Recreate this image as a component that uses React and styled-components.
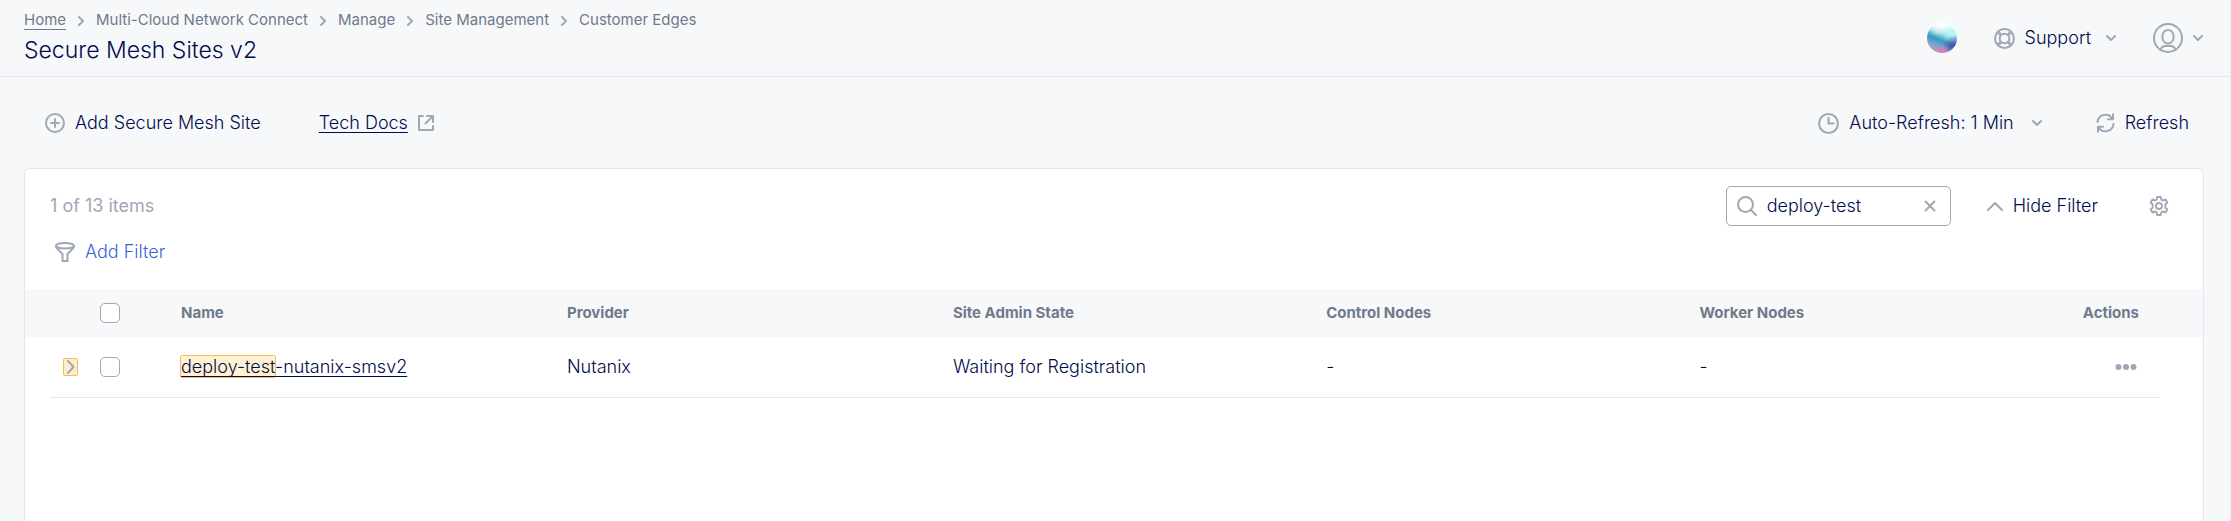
import React, { useState } from "react";
import styled, { createGlobalStyle } from "styled-components";

const ink = "#000c4d";
const slate = "#6f7a8b";
const mute = "#a0a8b5";
const line = "#e4e8ee";
const surface = "#f7f8fa";

const GlobalStyle = createGlobalStyle`
  * { box-sizing: border-box; }
  body {
    margin: 0;
    background: ${surface};
    color: ${ink};
    font: 300 18px/24px Inter, "Liberation Sans", sans-serif;
  }
  button, input { font: inherit; color: inherit; }
`;

const Page = styled.div`
  display: flex;
  flex-direction: column;
  min-height: 100vh;
  border-right: 2px solid #eff0f1;
`;

const Header = styled.header`
  display: flex;
  justify-content: space-between;
  align-items: flex-start;
  padding: 11px 26px 10px 24px;
  border-bottom: 1px solid ${line};
`;

const Crumbs = styled.ol`
  display: flex;
  align-items: center;
  gap: 12px;
  margin: 0;
  padding: 0;
  list-style: none;
  font-size: 15px;
  font-weight: 400;
  line-height: 20px;
  color: ${slate};
`;

const Crumb = styled.li`
  display: flex;
  align-items: center;
  gap: 12px;
`;

const CrumbLink = styled.a`
  color: inherit;
  text-decoration: none;
  border-bottom: 1px solid ${(p) => (p.$underlined ? slate : "transparent")};
  line-height: 18px;
`;

const Title = styled.h1`
  margin: 4px 0 0;
  font-size: 23px;
  font-weight: 300;
  line-height: 32px;
`;

const HeaderTools = styled.div`
  display: flex;
  align-items: center;
  gap: 37px;
  padding: 12px 0 0;
`;

const GhostButton = styled.button`
  display: flex;
  align-items: center;
  gap: 10px;
  padding: 0;
  border: 0;
  background: none;
  color: ${(p) => p.$color || ink};
  cursor: pointer;
  white-space: nowrap;
`;

const Spaced = styled.span`
  display: flex;
  margin-left: ${(p) => p.$left}px;
`;

const Toolbar = styled.div`
  display: flex;
  justify-content: space-between;
  align-items: center;
  padding: 34px 40px 33px 45px;
`;

const Group = styled.div`
  display: flex;
  align-items: center;
  gap: ${(p) => p.$gap}px;
`;

const DocLink = styled.a`
  display: flex;
  align-items: center;
  gap: 10px;
  color: ${ink};
  text-decoration: none;
`;

const Underlined = styled.span`
  text-decoration: underline 1px;
  text-underline-offset: 3px;
  text-decoration-skip-ink: none;
`;

const Card = styled.main`
  flex: 1;
  margin: 0 25px 0 24px;
  border: 1px solid ${line};
  border-bottom: 0;
  border-radius: 6px 6px 0 0;
  background: #fff;
`;

const ListBar = styled.div`
  display: flex;
  justify-content: space-between;
  align-items: center;
  padding: 17px 34px 0 25px;
`;

const Count = styled.span`
  color: ${mute};
  font-weight: 400;
`;

const SearchBox = styled.label`
  display: flex;
  align-items: center;
  gap: 10px;
  width: 225px;
  height: 40px;
  padding: 0 14px 0 10px;
  border: 1px solid ${mute};
  border-radius: 5px;
  svg { flex: none; }
`;

const SearchInput = styled.input`
  flex: 1;
  min-width: 0;
  padding: 0;
  border: 0;
  outline: 0;
  background: none;
`;

const FilterRow = styled.div`
  padding: 14px 30px 25px;
`;

const TableWrap = styled.div`
  margin: 0 44px 0 25px;
`;

const Table = styled.table`
  width: 100%;
  table-layout: fixed;
  border-collapse: separate;
  border-spacing: 0;
`;

const Head = styled.th`
  width: ${(p) => p.$w || "auto"};
  height: 48px;
  padding: 0 ${(p) => (p.$end ? 20 : 0)}px 0 0;
  background: ${surface};
  color: ${slate};
  font-size: 15px;
  font-weight: 700;
  text-align: ${(p) => (p.$end ? "right" : "left")};
  &:first-child { box-shadow: -25px 0 0 ${surface}; }
  &:last-child { box-shadow: 44px 0 0 ${surface}; }
`;

const Cell = styled.td`
  height: 61px;
  padding: 0 ${(p) => (p.$end ? 22 : 0)}px 0 0;
  border-bottom: 1px solid ${line};
`;

const Check = styled.input`
  display: block;
  appearance: none;
  width: 20px;
  height: 20px;
  margin: 0;
  border: 1px solid ${mute};
  border-radius: 5px;
  background: #fff;
  &:checked { background: ${mute}; }
`;

const Expand = styled.button`
  display: flex;
  align-items: center;
  justify-content: center;
  width: 15px;
  height: 18px;
  margin-left: 13px;
  padding: 0;
  border: 1px solid #f5bd55;
  border-radius: 2px;
  background: #fdeecb;
`;

const Mark = styled.mark`
  color: inherit;
  background: #fff2d2;
  border-radius: 2px;
  box-shadow: 0 0 0 1px #f5bd55;
  text-decoration: inherit;
`;

const SiteLink = styled.a`
  color: ${ink};
  text-decoration: underline 1px;
  text-underline-offset: 3px;
  text-decoration-skip-ink: none;
`;

const MoreButton = styled.button`
  display: block;
  margin-left: auto;
  padding: 0;
  border: 0;
  background: none;
  svg { display: block; }
`;

const Icon = ({ w = 20, h = 20, sw = 2, box, children }) => (
  <svg
    width={w}
    height={h}
    viewBox={box || `0 0 ${w} ${h}`}
    fill="none"
    stroke={mute}
    strokeWidth={sw}
    strokeLinecap="round"
    strokeLinejoin="round"
    aria-hidden="true"
  >
    {children}
  </svg>
);

const CrumbChevron = () => (
  <Icon w={6} h={10}><path d="M1 1l4 4-4 4" /></Icon>
);
const DownChevron = () => (
  <Icon w={10} h={6}><path d="M1 1l4 4 4-4" /></Icon>
);
const UpChevron = () => (
  <Icon w={16} h={10}><path d="M1 9l7-7 7 7" /></Icon>
);
const PlusCircle = () => (
  <Icon><circle cx="10" cy="10" r="9" /><path d="M10 6v8M6 10h8" /></Icon>
);
const External = () => (
  <Icon w={16} h={16}>
    <path d="M5 1H1v14h14v-4M9 1h6v6M15 1L7.5 8.5" />
  </Icon>
);
const Lifebuoy = () => (
  <Icon w={21} h={21} box="0 0 20 20" sw={1.9}>
    <circle cx="10" cy="10" r="9" />
    <circle cx="10" cy="10" r="4.6" />
    <path d="M3.2 4.6l3 2.4M4.6 3.2l2.4 3M16.8 4.6l-3 2.4M15.4 3.2l-2.4 3M3.2 15.4l3-2.4M4.6 16.8l2.4-3M16.8 15.4l-3-2.4M15.4 16.8l-2.4-3" strokeWidth="1.4" />
  </Icon>
);
const User = () => (
  <Icon w={30} h={30}>
    <circle cx="15" cy="15" r="14" />
    <rect x="9.5" y="7" width="11" height="13.5" rx="5.5" />
    <path d="M8 26.500c0-5 14-5 14 0" />
  </Icon>
);
const Clock = () => (
  <Icon w={21} h={21} box="0 0 20 20"><circle cx="10" cy="10" r="9" /><path d="M10 4.8V10h5" /></Icon>
);
const Cycle = () => (
  <Icon w={19} h={20}>
    <path d="M1.5 9a8 8 0 0 1 14.8-3.4M17 1.2v5h-5M17.5 11a8 8 0 0 1-14.8 3.4M2 18.8v-5h5" />
  </Icon>
);
const Magnifier = () => (
  <Icon><circle cx="8.5" cy="8.5" r="7.5" /><path d="M14 14l5 5" /></Icon>
);
const Cross = () => (
  <Icon w={12} h={12}><path d="M1.5 1.5l9 9M10.5 1.5l-9 9" /></Icon>
);
const Gear = () => (
  <Icon sw={1.9}>
    <path d="M8.2 1h3.6l.5 2.6 1.7.9 2.5-1 1.9 3-2 1.8v3.4l2 1.8-1.9 3-2.5-1-1.7.9-.5 2.600H8.200l-.5-2.600-1.7-.9-2.5 1-1.9-3 2-1.8V8.300l-2-1.800 1.9-3 2.500 1 1.700-.9z" />
    <circle cx="10" cy="10" r="3" />
  </Icon>
);
const Funnel = () => (
  <Icon>
    <ellipse cx="10" cy="3.8" rx="9" ry="2.8" />
    <path d="M1 4.2c0 1 .4 1.600 1.200 2.400L7.500 12v7h5v-7l5.300-5.400c.8-.8 1.200-1.400 1.200-2.400" />
  </Icon>
);
const Dots = () => (
  <svg width="22" height="8" viewBox="0 0 22 8" fill={mute} aria-hidden="true">
    <circle cx="3.5" cy="4" r="3" /><circle cx="11" cy="4" r="3" /><circle cx="18.5" cy="4" r="3" />
  </svg>
);
const Orb = () => (
  <svg width="30" height="30" viewBox="0 0 30 30" aria-hidden="true">
    <defs>
      <linearGradient id="orb" x1="0.68" y1="0.02" x2="0.28" y2="0.98">
        <stop offset="0.08" stopColor="#ffffff" />
        <stop offset="0.36" stopColor="#a0dbe6" />
        <stop offset="0.58" stopColor="#359abf" />
        <stop offset="0.78" stopColor="#7fa3cf" />
        <stop offset="1" stopColor="#c79ac8" />
      </linearGradient>
      <radialGradient id="orbCyan" cx="0.88" cy="0.3" r="0.4">
        <stop offset="0" stopColor="#b4fbfb" />
        <stop offset="1" stopColor="#b4fbfb" stopOpacity="0" />
      </radialGradient>
      <radialGradient id="orbGlow" cx="0.38" cy="0.04" r="0.4">
        <stop offset="0" stopColor="#ffffff" />
        <stop offset="1" stopColor="#ffffff" stopOpacity="0" />
      </radialGradient>
      <radialGradient id="orbViolet" cx="0.95" cy="0.8" r="0.42">
        <stop offset="0" stopColor="#4a3aa8" />
        <stop offset="1" stopColor="#4a3aa8" stopOpacity="0" />
      </radialGradient>
      <radialGradient id="orbPink" cx="0.5" cy="1" r="0.28">
        <stop offset="0" stopColor="#ef6fa8" />
        <stop offset="1" stopColor="#ef6fa8" stopOpacity="0" />
      </radialGradient>
    </defs>
    {["orb", "orbCyan", "orbGlow", "orbViolet", "orbPink"].map((id) => (
      <circle key={id} cx="15" cy="15" r="15" fill={`url(#${id})`} />
    ))}
  </svg>
);

const trail = ["Home", "Multi-Cloud Network Connect", "Manage", "Site Management", "Customer Edges"];

export default function App() {
  const [query, setQuery] = useState("deploy-test");
  return (
    <Page>
      <GlobalStyle />
      <Header>
        <div>
          <nav aria-label="Breadcrumb">
            <Crumbs>
              {trail.map((t, i) => (
                <Crumb key={t}>
                  {i > 0 && <CrumbChevron />}
                  <CrumbLink href="#" $underlined={i === 0}>{t}</CrumbLink>
                </Crumb>
              ))}
            </Crumbs>
          </nav>
          <Title>Secure Mesh Sites v2</Title>
        </div>
        <HeaderTools>
          <GhostButton aria-label="Assistant"><Orb /></GhostButton>
          <GhostButton>
            <Lifebuoy />Support<Spaced $left={5}><DownChevron /></Spaced>
          </GhostButton>
          <GhostButton aria-label="Account"><User /><DownChevron /></GhostButton>
        </HeaderTools>
      </Header>

      <Toolbar>
        <Group $gap={58}>
          <GhostButton><PlusCircle />Add Secure Mesh Site</GhostButton>
          <DocLink href="#"><Underlined>Tech Docs</Underlined><External /></DocLink>
        </Group>
        <Group $gap={54}>
          <GhostButton>
            <Clock />Auto-Refresh: 1 Min<Spaced $left={8}><DownChevron /></Spaced>
          </GhostButton>
          <GhostButton><Cycle />Refresh</GhostButton>
        </Group>
      </Toolbar>

      <Card>
        <ListBar>
          <Count>1 of 13 items</Count>
          <Group $gap={51}>
            <Group $gap={36}>
              <SearchBox>
                <Magnifier />
                <SearchInput aria-label="Search" value={query} onChange={(e) => setQuery(e.target.value)} />
                <GhostButton aria-label="Clear search" onClick={() => setQuery("")}><Cross /></GhostButton>
              </SearchBox>
              <GhostButton><UpChevron />Hide Filter</GhostButton>
            </Group>
            <GhostButton aria-label="Settings"><Gear /></GhostButton>
          </Group>
        </ListBar>
        <FilterRow>
          <GhostButton $color="#3c62e0"><Funnel />Add Filter</GhostButton>
        </FilterRow>
        <TableWrap>
          <Table>
            <thead>
              <tr>
                <Head $w="50px" aria-label="Expand" />
                <Head $w="81px"><Check type="checkbox" aria-label="Select all" /></Head>
                <Head $w="18.3%">Name</Head>
                <Head $w="18.3%">Provider</Head>
                <Head $w="17.7%">Site Admin State</Head>
                <Head $w="17.7%">Control Nodes</Head>
                <Head>Worker Nodes</Head>
                <Head $w="88px" $end>Actions</Head>
              </tr>
            </thead>
            <tbody>
              <tr>
                <Cell>
                  <Expand aria-label="Expand row">
                    <Icon w={8} h={14}><path d="M1 1l5.5 6L1 13" /></Icon>
                  </Expand>
                </Cell>
                <Cell><Check type="checkbox" aria-label="Select deploy-test-nutanix-smsv2" /></Cell>
                <Cell><SiteLink href="#"><Mark>deploy-test</Mark>-nutanix-smsv2</SiteLink></Cell>
                <Cell>Nutanix</Cell>
                <Cell>Waiting for Registration</Cell>
                <Cell>-</Cell>
                <Cell>-</Cell>
                <Cell $end><MoreButton aria-label="Row actions"><Dots /></MoreButton></Cell>
              </tr>
            </tbody>
          </Table>
        </TableWrap>
      </Card>
    </Page>
  );
}
